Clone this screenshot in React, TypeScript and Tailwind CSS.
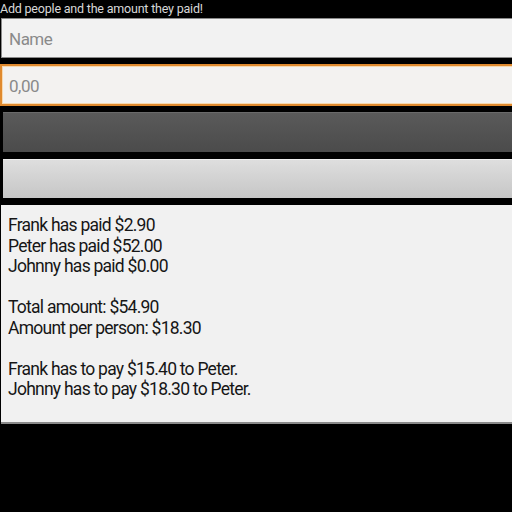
export default function App() {
  const paid = [
    { name: "Frank", amount: "2.90" },
    { name: "Peter", amount: "52.00" },
    { name: "Johnny", amount: "0.00" },
  ];

  return (
    <main
      className="w-[512px] h-[512px] bg-black overflow-hidden"
      style={{ fontFamily: "Roboto, 'Liberation Sans', sans-serif" }}
    >
      <p className="h-[18px] text-[12.5px] leading-[17px] tracking-[-0.2px] text-[#d8d8d8]">
        Add people and the amount they paid!
      </p>

      <div className="ml-[1px] h-[40px] bg-[#f2f2f2] border border-r-0 border-[#8a8a8a] flex items-center pl-[7px] pt-[4px] text-[17px] tracking-[-0.5px] text-[#8a8a8a]">
        Name
      </div>

      <div className="mt-[6px] h-[42px] bg-[#f3f2f0] border-[2px] border-r-0 border-[#e08a2e] flex items-center pl-[7px] pt-[3px] text-[17px] tracking-[-0.5px] text-[#8a8a8a] shadow-[inset_1px_1px_0_0_#f7d9b0,inset_0_-1px_0_0_#f7d9b0]">
        0,00
      </div>

      <div className="mt-[6px] ml-[3px] h-[40px] bg-gradient-to-b from-[#5a5a5a] to-[#4b4b4b] border-t border-[#6a6a6a]" />

      <div className="mt-[7px] ml-[3px] h-[39px] bg-gradient-to-b from-[#dedede] to-[#c6c6c6] border-t border-[#eeeeee]" />

      <section className="mt-[7px] ml-[1px] h-[219px] bg-[#f1f1f1] border-b-[2px] border-[#8a8a8a] pt-[10px] pl-[7px] text-[17.5px] leading-[20.5px] tracking-[-0.75px] text-[#161616]">
        {paid.map((p) => (
          <p key={p.name}>
            {p.name} has paid ${p.amount}
          </p>
        ))}
        <p className="h-[20.5px]" />
        <p>Total amount: $54.90</p>
        <p>Amount per person: $18.30</p>
        <p className="h-[20.5px]" />
        <p>Frank has to pay $15.40 to Peter.</p>
        <p>Johnny has to pay $18.30 to Peter.</p>
      </section>
    </main>
  );
}
